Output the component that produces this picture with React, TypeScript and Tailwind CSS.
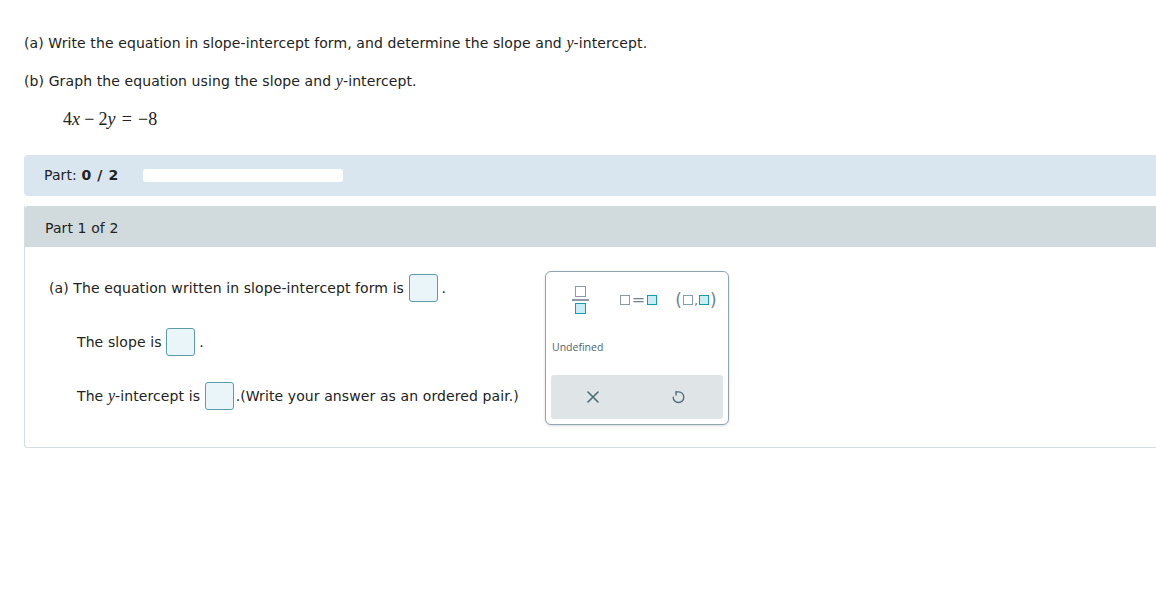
import React from "react";

const sans = { fontFamily: "'DejaVu Sans', Verdana, sans-serif" };

function V({ children }: { children: React.ReactNode }) {
  return <span className="font-['Liberation_Serif',serif] text-[16px] italic">{children}</span>;
}

function AnswerBox() {
  return <span className="inline-block h-[28px] w-[29px] rounded-[3px] border border-[#5b9ca6] bg-[#e9f5f9]" />;
}

function GrayBox({ size = 10 }: { size?: number }) {
  return <span className="inline-block border-[1.5px] border-[#8b9ca5] bg-white" style={{ width: size, height: size }} />;
}

function TealBox({ size = 10 }: { size?: number }) {
  return <span className="inline-block border-[1.5px] border-[#1a9ab0] bg-[#c8eef4]" style={{ width: size, height: size }} />;
}

// circular "reset" arrow, drawn like a 5
function UndoIcon() {
  return (
    <svg width="17" height="17" viewBox="0 0 24 24" fill="none" stroke="#4a6a76" strokeWidth="1.9" strokeLinecap="round" strokeLinejoin="round">
      <path d="M8.5 4H12a7.5 7.5 0 1 1-7.5 7.5" />
      <path d="M8.5 4v4.5" />
    </svg>
  );
}

function Keypad() {
  return (
    <div className="flex h-[154px] w-[184px] flex-col rounded-[6px] border border-[#8fa5ad] bg-white p-[5px] shadow-[0_1px_3px_rgba(0,0,0,0.15)]">
      <div className="flex h-[46px] items-center">
        <div className="flex w-[56px] flex-col items-center gap-[2px] pl-[2px]">
          <GrayBox size={11} />
          <span className="h-[2px] w-[17px] bg-[#8b9ca5]" />
          <TealBox size={11} />
        </div>
        <div className="flex w-[60px] items-center justify-center gap-[2px] pl-[3px]">
          <GrayBox />
          <span className="text-[16px] leading-none text-[#6f848c]">=</span>
          <TealBox />
        </div>
        <div className="flex w-[56px] items-center justify-center gap-[1px] pl-[2px] text-[#6f848c]">
          <span className="text-[17px] leading-none">(</span>
          <GrayBox />
          <span className="text-[13px] leading-none">,</span>
          <TealBox />
          <span className="text-[17px] leading-none">)</span>
        </div>
      </div>
      <div className="flex h-[50px] items-center pl-[1px] font-['Open_Sans',sans-serif] text-[10.5px] tracking-normal text-[#51656e]">
        Undefined
      </div>
      <div className="mt-[2px] flex h-[44px] items-center rounded-[3px] bg-[#dfe5e7]">
        <div className="flex w-[84px] justify-center">
          <svg width="14" height="14" viewBox="0 0 14 14" stroke="#4a6a76" strokeWidth="1.6" strokeLinecap="round">
            <path d="M2 2l10 10M12 2L2 12" />
          </svg>
        </div>
        <div className="flex w-[86px] justify-center">
          <UndoIcon />
        </div>
      </div>
    </div>
  );
}

export default function App() {
  return (
    <div className="h-[615px] w-screen overflow-hidden bg-white text-[14px] tracking-[0.1px] text-[#222]" style={sans}>
      <div className="w-[1180px] pl-6 pt-[33px]">
        {/* Prompt */}
        <p className="h-[20px] leading-[20px]">
          (a) Write the equation in slope-intercept form, and determine the slope and <V>y</V>-intercept.
        </p>
        <p className="mt-[18px] h-[20px] leading-[20px]">
          (b) Graph the equation using the slope and <V>y</V>-intercept.
        </p>
        <p className="mt-[18px] h-[20px] pl-[39px] font-['Liberation_Serif',serif] text-[18px] leading-[20px]">
          4<i>x</i>
          <span className="px-[4px]">−</span>2<i>y</i>
          <span className="px-[6px]">=</span>−8
        </p>

        {/* Progress */}
        <div className="mt-[26px] flex h-[41px] items-center rounded-l-[4px] bg-[#dae6ef] pl-5">
          <span>
            Part: <b className="tracking-[0.6px]">0 / 2</b>
          </span>
          <span className="ml-[24px] h-[13px] w-[200px] rounded-[3px] bg-white" />
        </div>

        {/* Part 1 */}
        <div className="mt-[10px] rounded-bl-[4px] border-b border-l border-[#d3dee2]">
          <div className="flex h-[41px] items-center rounded-tl-[3px] bg-[#d1dadd] pl-5 pt-[3px]">Part 1 of 2</div>
          <div className="flex h-[200px] items-start pl-6 pt-[24px]">
            <div className="flex w-[496px] flex-col gap-[26px] pt-[3px]">
              <div className="flex h-[28px] items-center">
                <span>(a) The equation written in slope-intercept form is&nbsp;</span>
                <AnswerBox />
                <span className="ml-[4px]">.</span>
              </div>
              <div className="flex h-[28px] items-center pl-[28px]">
                <span>The slope is&nbsp;</span>
                <AnswerBox />
                <span className="ml-[4px]">.</span>
              </div>
              <div className="flex h-[28px] items-center pl-[28px]">
                <span>
                  The <V>y</V>-intercept is&nbsp;
                </span>
                <AnswerBox />
                <span className="ml-[2px]">.(Write your answer as an ordered pair.)</span>
              </div>
            </div>
            <Keypad />
          </div>
        </div>
      </div>
    </div>
  );
}
